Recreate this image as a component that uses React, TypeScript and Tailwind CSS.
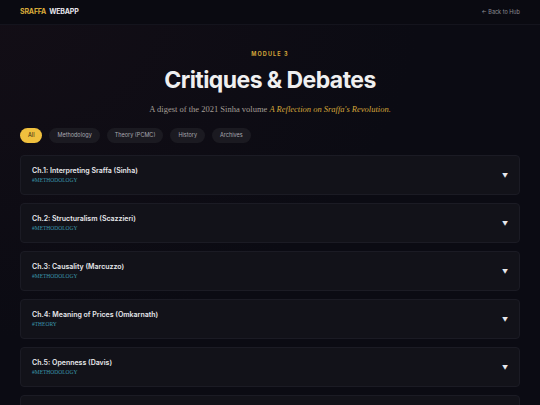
const filters = ["All", "Methodology", "Theory (PCMC)", "History", "Archives"];

const chapters = [
  { title: "Ch.1: Interpreting Sraffa (Sinha)", tag: "#METHODOLOGY" },
  { title: "Ch.2: Structuralism (Scazzieri)", tag: "#METHODOLOGY" },
  { title: "Ch.3: Causality (Marcuzzo)", tag: "#METHODOLOGY" },
  { title: "Ch.4: Meaning of Prices (Omkarnath)", tag: "#THEORY" },
  { title: "Ch.5: Openness (Davis)", tag: "#METHODOLOGY" },
  { title: "Ch.6: Production of Commodities (Kurz)", tag: "#THEORY" },
];

export default function App() {
  return (
    <div className="min-h-screen bg-[#0b0b13] bg-[radial-gradient(ellipse_at_top_left,#130e16,#0b0b13_55%)] text-white font-['Inter',sans-serif]">
      <header className="h-[25px] flex items-center justify-between px-5 bg-[#0a0a11] border-b border-[#14141d]">
        <div className="text-[7px] font-bold tracking-tight">
          <span className="text-[#d9ab3a]">SRAFFA</span>
          <span className="text-[#e6e6ea] ml-[3px]">WEBAPP</span>
        </div>
        <a className="text-[5.5px] text-[#8a8a94]">← Back to Hub</a>
      </header>

      <main className="px-5">
        <section className="flex flex-col items-center pt-[27px]">
          <p className="text-[5.5px] font-bold tracking-[0.2em] text-[#d4a63a] leading-none">MODULE 3</p>
          <h1 className="mt-[11px] text-[23px] font-bold tracking-tight text-[#efefef] leading-none">Critiques &amp; Debates</h1>
          <p className="mt-[13px] text-[8.5px] text-[#a39d94] font-['Liberation_Serif',serif] leading-none">
            A digest of the 2021 Sinha volume{" "}
            <em className="text-[#d4a63a]">A Reflection on Sraffa's Revolution.</em>
          </p>
        </section>

        <div className="mt-[15px] flex gap-[7px]">
          {filters.map((f, i) => (
            <button
              key={f}
              className={`h-[15px] rounded-full px-[8px] text-[5.5px] leading-none ${
                i === 0 ? "bg-[#f0c03e] text-[#2a2410] px-[7px]" : "bg-[#1b1a21] text-[#a8a8b0]"
              }`}
            >
              {f}
            </button>
          ))}
        </div>

        <div className="mt-[12px] flex flex-col gap-[8px]">
          {chapters.map((c) => (
            <div
              key={c.title}
              className="h-[40px] flex items-center justify-between px-[11px] rounded-[4px] bg-[#121219] border border-[#1b1b24]"
            >
              <div className="flex flex-col">
                <span className="text-[7px] font-semibold text-[#e8e8ec] leading-none">{c.title}</span>
                <span className="mt-[4px] text-[5.5px] text-[#3b97ab] font-['Liberation_Serif',serif] leading-none">{c.tag}</span>
              </div>
              <span className="text-[6px] text-[#e8e8ec]">▼</span>
            </div>
          ))}
        </div>
      </main>
    </div>
  );
}
